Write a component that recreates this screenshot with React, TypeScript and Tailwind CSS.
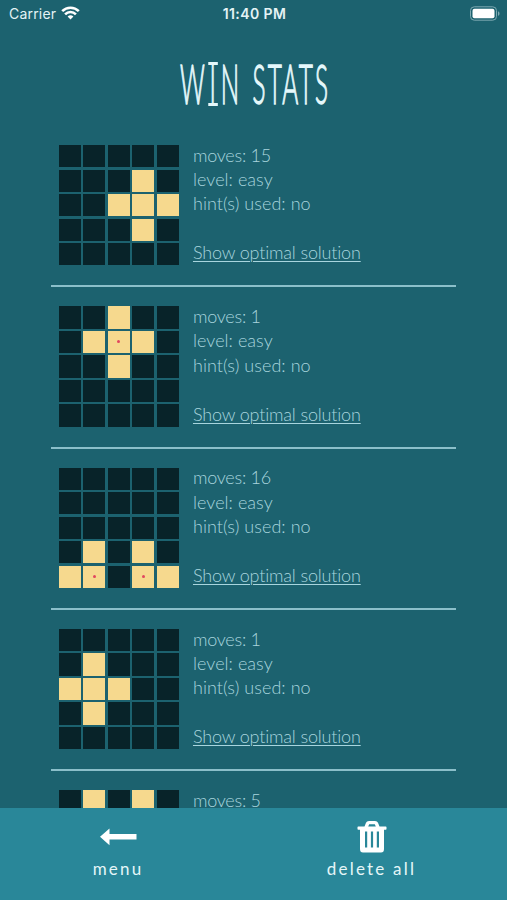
import React from 'react';

type Win = { moves: number; level?: string; hint?: string; lit: number[]; dots: number[] };

// lit and dots are cell indexes on the 5x5 board, row by row
const WINS: Win[] = [
  { moves: 15, level: 'easy', hint: 'no', lit: [8, 12, 13, 14, 18], dots: [] },
  { moves: 1, level: 'easy', hint: 'no', lit: [2, 6, 7, 8, 12], dots: [7] },
  { moves: 16, level: 'easy', hint: 'no', lit: [16, 18, 20, 21, 23, 24], dots: [21, 23] },
  { moves: 1, level: 'easy', hint: 'no', lit: [6, 10, 11, 12, 16], dots: [] },
  { moves: 5, lit: [1, 3], dots: [] },
];

const CELLS = Array.from({ length: 25 }, (_, i) => i);

function StatusBar() {
  return (
    <div className="grid h-7 shrink-0 grid-cols-3 items-center pl-[9px] pr-[7px] pb-[2px] font-['Inter',sans-serif] text-[#e4f3f5]">
      <div className="flex items-center gap-[5px]">
        <span className="text-[14px] tracking-[0.2px]">Carrier</span>
        <svg width="19" height="14" viewBox="0 0 19 14" fill="none" stroke="#fff" strokeWidth="2.6">
          <path d="M1.2 5.2a11.8 11.8 0 0 1 16.6 0" />
          <path d="M4.1 8.3a7.6 7.6 0 0 1 10.8 0" />
          <path d="M9.5 13.5 6.6 10.6a4.1 4.1 0 0 1 5.8 0z" fill="#fff" stroke="none" />
        </svg>
      </div>
      <span className="text-center text-[14px] font-semibold tracking-[0.4px]">11:40 PM</span>
      <svg className="justify-self-end" width="30" height="15" viewBox="0 0 30 15">
        <rect x="0.5" y="0.8" width="26" height="13.4" rx="3.8" fill="none" stroke="#7da9b1" />
        <rect x="2.5" y="2.7" width="22" height="9.6" rx="2" fill="#fff" />
        <path d="M28 5.2c2 .8 2 3.8 0 4.6z" fill="#7da9b1" />
      </svg>
    </div>
  );
}

function Title() {
  return (
    <h1 className="flex h-[117px] shrink-0 items-center justify-center pb-[7px] font-['Lato',sans-serif] text-[56px] font-light leading-none text-[#e5f8fb] [-webkit-text-stroke:1.3px_#e5f8fb]">
      <span className="flex origin-center scale-x-[0.435] gap-[20px] whitespace-nowrap pl-[9px]">
        <span className="tracking-[11px]">
          W
          <span className="relative before:absolute before:top-[13px] before:left-[-3px] before:h-[3px] before:w-[22px] before:bg-[#e5f8fb] after:absolute after:bottom-[10px] after:left-[-3px] after:h-[3px] after:w-[22px] after:bg-[#e5f8fb]">I</span>
          N
        </span>
        <span className="tracking-[5px]">STATS</span>
      </span>
    </h1>
  );
}

function Board({ lit, dots }: { lit: number[]; dots: number[] }) {
  return (
    <div className="grid h-[120.4px] w-[120.4px] shrink-0 grid-cols-5 grid-rows-5 gap-[2.2px]">
      {CELLS.map((i) => (
        <div key={i} className={`flex items-center justify-center ${lit.includes(i) ? 'bg-[#f6d98e]' : 'bg-[#082329]'}`}>
          {dots.includes(i) && <span className="size-[3px] rounded-full bg-[#e2475f]" />}
        </div>
      ))}
    </div>
  );
}

function WinRow({ win }: { win: Win }) {
  return (
    <li className="flex h-[161.3px] shrink-0 flex-col">
      <div className="flex pl-[7.4px]">
        <Board lit={win.lit} dots={win.dots} />
        <div className="ml-[14px] -mt-[2.4px] flex flex-col items-start whitespace-nowrap font-['Lato',sans-serif] text-[18px] font-light leading-[24.4px] text-[#a8d5de] [font-variant-ligatures:none]">
          <p className="tracking-[-0.25px]">moves: {win.moves}</p>
          {win.level && <p className="tracking-[0.05px]">level: {win.level}</p>}
          {win.hint && (
            <>
              <p className="tracking-[0.05px]">hint(s) used: {win.hint}</p>
              <button className="mt-[24.4px] tracking-[-0.17px] underline decoration-1 underline-offset-[2px]">Show optimal solution</button>
            </>
          )}
        </div>
      </div>
      <div className="mt-[20px] h-[2px] shrink-0 bg-[#8bbfca]" />
    </li>
  );
}

export default function App() {
  return (
    <div className="flex h-[900px] w-[507px] flex-col overflow-hidden bg-[#1c626f]">
      <StatusBar />
      <Title />
      <ul className="mx-[51.2px] flex min-h-0 flex-1 flex-col overflow-hidden">
        {WINS.map((win, i) => (
          <WinRow key={i} win={win} />
        ))}
      </ul>
      <nav className="flex h-[92px] shrink-0 bg-[#298799] font-['Lato',sans-serif] text-[17px] tracking-[2.2px] text-[#e5f6f8]">
        <button className="flex w-[236px] flex-col items-center pt-[12px]">
          <svg width="37" height="34" viewBox="0 0 37 34" fill="#fff">
            <path d="M0 16.800 9.500 8.400v5.700H36.500v5.400H9.500v5.800z" />
          </svg>
          <span className="leading-[30px]">menu</span>
        </button>
        <button className="flex w-[271px] flex-col items-center pt-[12px]">
          <svg width="30" height="34" viewBox="0 0 30 34" fill="#fff" fillRule="evenodd">
            <path d="M7.500 6.500 9 2.800Q9.700 1 12 1h6q2.300 0 3 1.800l1.500 3.700h6.300q.7 0 .7.8v1.600q0 .8-.7.8H27V29q0 3.500-3 3.500H6Q3 32.500 3 29V9.700H1.200q-.7 0-.7-.8V7.300q0-.8.7-.8zM11.200 6.500h7.600l-1-2.200h-5.600zM8 11.500v16h2.200V11.500zM13.900 11.500v16h2.200V11.500zM19.800 11.500v16h2.200V11.500z" />
          </svg>
          <span className="leading-[30px]">delete all</span>
        </button>
      </nav>
    </div>
  );
}
